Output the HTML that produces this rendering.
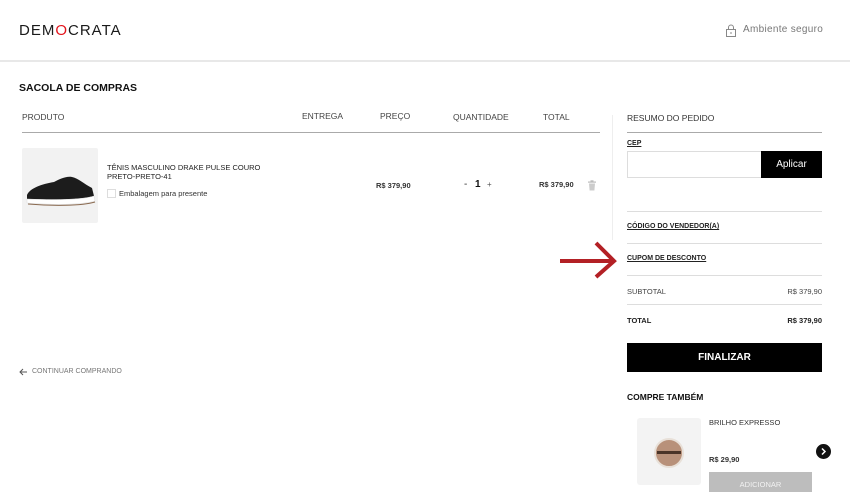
<!DOCTYPE html>
<html><head><meta charset="utf-8"><style>
*{margin:0;padding:0;box-sizing:border-box}
body{width:850px;height:490px;overflow:hidden;background:#fff;font-family:"Liberation Sans",sans-serif;color:#222;position:relative}
.a{position:absolute;white-space:nowrap}
.h{font-size:8.5px;color:#444}
.l{position:absolute;height:1px;background:#ddd}
.u{text-decoration:underline;font-weight:bold;font-size:7px;color:#222}
</style></head><body>
<div class="a" style="left:19px;top:22px;font-size:15px;letter-spacing:1px;color:#1a1a1a">DEM<span style="color:#e3131b">O</span>CRATA</div>
<svg class="a" style="left:725px;top:24px" width="12" height="13" viewBox="0 0 12 13"><rect x="1.5" y="5.5" width="9" height="7" fill="none" stroke="#888"/><path d="M3.5 5.5V3.5a2.5 2.5 0 0 1 5 0v2" fill="none" stroke="#888"/><rect x="5.5" y="8" width="1" height="2" fill="#888"/></svg>
<div class="a" style="left:743px;top:24px;font-size:10px;color:#777;letter-spacing:.3px">Ambiente seguro</div>
<div class="l" style="left:0;top:60px;width:850px;height:2px;background:#e8e8e8"></div>
<div class="a" style="left:19px;top:82px;font-size:10.5px;font-weight:bold;color:#111">SACOLA DE COMPRAS</div>
<div class="a h" style="left:22px;top:112px">PRODUTO</div>
<div class="a h" style="left:302px;top:111px">ENTREGA</div>
<div class="a h" style="left:380px;top:111px">PREÇO</div>
<div class="a h" style="left:453px;top:112px">QUANTIDADE</div>
<div class="a h" style="left:543px;top:112px">TOTAL</div>
<div class="l" style="left:22px;top:132px;width:578px;background:#aaa"></div>
<div class="l" style="left:612px;top:115px;width:1px;height:125px;background:#eee"></div>
<div class="a" style="left:22px;top:148px;width:76px;height:75px;background:#f2f2f2;border-radius:2px">
<svg width="76" height="75" viewBox="0 0 76 75"><path d="M5 47 C8 40 20 36 32 34 C38 31 44 28 50 29 C56 30 62 36 70 40 L72 48 C60 52 30 52 5 51Z" fill="#1c1c1c"/><path d="M5 51 C30 52 60 52 72 48 L73 53 C60 57 30 57 5 55Z" fill="#fff" stroke="#ddd" stroke-width=".5"/><path d="M6 56 C30 58 60 58 73 54" stroke="#8a6a50" stroke-width="1" fill="none"/></svg></div>
<div class="a" style="left:107px;top:163px;font-size:7.5px;line-height:9px;color:#222">TÊNIS MASCULINO DRAKE PULSE COURO<br>PRETO-PRETO-41</div>
<div class="a" style="left:107px;top:189px;width:9px;height:9px;border:1px solid #ddd"></div>
<div class="a" style="left:119px;top:189px;font-size:7.5px;color:#333">Embalagem para presente</div>
<div class="a" style="left:376px;top:181px;font-size:7.5px;font-weight:bold;color:#333">R$ 379,90</div>
<div class="a" style="left:464px;top:179px;font-size:10px;color:#333">-</div>
<div class="a" style="left:475px;top:179px;font-size:10px;font-weight:bold;color:#111">1</div>
<div class="a" style="left:487px;top:180px;font-size:8px;color:#555">+</div>
<div class="a" style="left:539px;top:180px;font-size:7.5px;font-weight:bold;color:#333">R$ 379,90</div>
<svg class="a" style="left:587px;top:180px" width="10" height="11" viewBox="0 0 10 11"><rect x="1" y="1.5" width="8" height="1.2" fill="#bbb"/><rect x="3.5" y="0.3" width="3" height="1.2" fill="#bbb"/><path d="M2 3.5h6l-.6 7H2.6z" fill="#ccc"/></svg>
<div class="a" style="left:627px;top:113px;font-size:8.5px;color:#333">RESUMO DO PEDIDO</div>
<div class="l" style="left:627px;top:132px;width:195px;background:#aaa"></div>
<div class="a u" style="left:627px;top:140px">CEP</div>
<div class="a" style="left:627px;top:151px;width:135px;height:27px;border:1px solid #ddd"></div>
<div class="a" style="left:761px;top:151px;width:61px;height:27px;background:#000;color:#fff;font-size:10px;text-align:center;line-height:27px">Aplicar</div>
<div class="l" style="left:627px;top:211px;width:195px"></div>
<div class="a u" style="left:627px;top:223px">CÓDIGO DO VENDEDOR(A)</div>
<div class="l" style="left:627px;top:243px;width:195px"></div>
<div class="a u" style="left:627px;top:255px">CUPOM DE DESCONTO</div>
<div class="l" style="left:627px;top:275px;width:195px"></div>
<div class="a" style="left:627px;top:287px;font-size:7.5px;color:#444">SUBTOTAL</div>
<div class="a" style="left:822px;top:287px;font-size:7.5px;color:#444;transform:translateX(-100%)">R$ 379,90</div>
<div class="l" style="left:627px;top:304px;width:195px"></div>
<div class="a" style="left:627px;top:316px;font-size:7.5px;font-weight:bold;color:#222">TOTAL</div>
<div class="a" style="left:822px;top:316px;font-size:7.5px;font-weight:bold;color:#222;transform:translateX(-100%)">R$ 379,90</div>
<div class="a" style="left:627px;top:343px;width:195px;height:29px;background:#000;color:#fff;font-size:10px;font-weight:bold;text-align:center;line-height:29px">FINALIZAR</div>
<div class="a" style="left:627px;top:392px;font-size:8.5px;font-weight:bold;color:#111">COMPRE TAMBÉM</div>
<div class="a" style="left:637px;top:418px;width:64px;height:67px;background:#f3f3f3;border-radius:3px"><div style="position:absolute;left:17px;top:20px;width:30px;height:30px;border-radius:50%;background:#b8917a;border:2px solid #e8e0d8"></div><div style="position:absolute;left:20px;top:33px;width:24px;height:3px;background:#4a3428"></div></div>
<div class="a" style="left:709px;top:418px;font-size:7.5px;color:#333">BRILHO EXPRESSO</div>
<div class="a" style="left:709px;top:455px;font-size:7.5px;font-weight:bold;color:#333">R$ 29,90</div>
<div class="a" style="left:709px;top:472px;width:103px;height:20px;background:#bdbdbd;color:#f2f2f2;font-size:7.5px;text-align:center;line-height:25px">ADICIONAR</div>
<div class="a" style="left:816px;top:444px;width:15px;height:15px;border-radius:50%;background:#111"><svg width="15" height="15"><path d="M6 4.5l3 3-3 3" stroke="#fff" stroke-width="1.5" fill="none"/></svg></div>
<svg class="a" style="left:558px;top:240px" width="62" height="40" viewBox="0 0 62 40"><path d="M2 21H54" stroke="#b32025" stroke-width="4"/><path d="M38 3L56 21L38 37" stroke="#b32025" stroke-width="4" fill="none" stroke-linejoin="miter"/></svg>
<svg class="a" style="left:19px;top:368px" width="9" height="8" viewBox="0 0 9 8"><path d="M8 4H1M4 1L1 4l3 3" stroke="#555" fill="none"/></svg>
<div class="a" style="left:32px;top:368px;font-size:7px;color:#777">CONTINUAR COMPRANDO</div>
</body></html>
